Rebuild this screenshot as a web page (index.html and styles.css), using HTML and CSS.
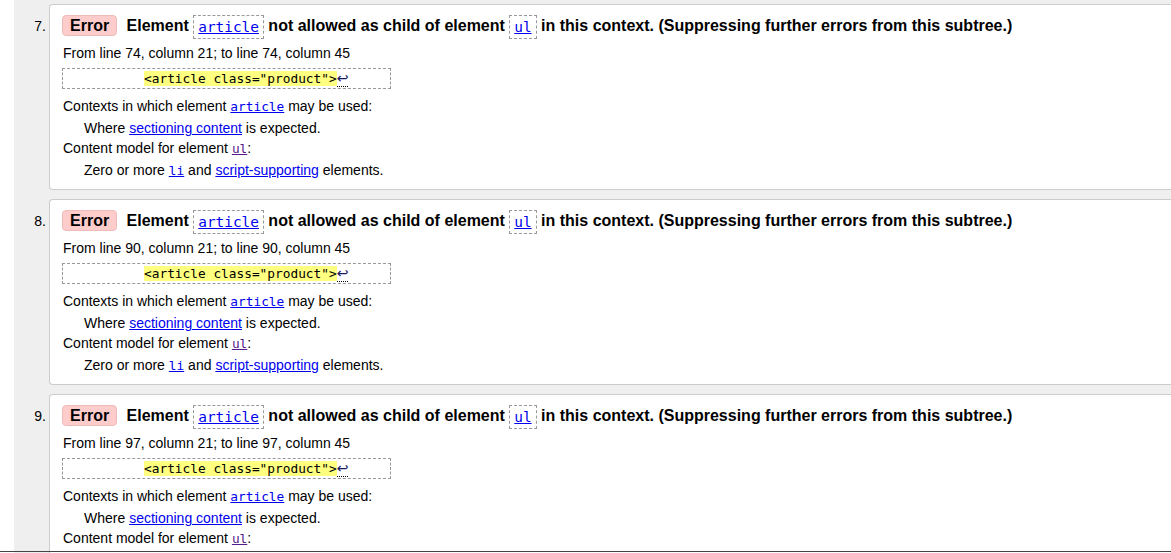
FILE: index.html
```html
<!DOCTYPE html>
<html lang="en">
<head>
<meta charset="utf-8">
<title>Validation results</title>
<link rel="stylesheet" href="styles.css">
</head>
<body>
<ol class="results">
  <li class="item">
    <span class="num">7.</span>
    <div class="card">
      <p class="msg"><span class="badge">Error</span> Element <code class="box"><a href="#">article</a></code> not allowed as child of element <code class="box"><a href="#">ul</a></code> in this context. (Suppressing further errors from this subtree.)</p>
      <p class="loc">From line 74, column 21; to line 74, column 45</p>
      <p class="extract"><code>          <mark>&lt;article class="product"&gt;</mark><span class="lf">↩</span></code></p>
      <dl class="details">
        <dt>Contexts in which element <a href="#"><code>article</code></a> may be used:</dt>
        <dd>Where <a href="#">sectioning content</a> is expected.</dd>
        <dt>Content model for element <a class="visited" href="#"><code>ul</code></a>:</dt>
        <dd>Zero or more <a href="#"><code>li</code></a> and <a href="#">script-supporting</a> elements.</dd>
      </dl>
    </div>
  </li>
  <li class="item">
    <span class="num">8.</span>
    <div class="card">
      <p class="msg"><span class="badge">Error</span> Element <code class="box"><a href="#">article</a></code> not allowed as child of element <code class="box"><a href="#">ul</a></code> in this context. (Suppressing further errors from this subtree.)</p>
      <p class="loc">From line 90, column 21; to line 90, column 45</p>
      <p class="extract"><code>          <mark>&lt;article class="product"&gt;</mark><span class="lf">↩</span></code></p>
      <dl class="details">
        <dt>Contexts in which element <a href="#"><code>article</code></a> may be used:</dt>
        <dd>Where <a href="#">sectioning content</a> is expected.</dd>
        <dt>Content model for element <a class="visited" href="#"><code>ul</code></a>:</dt>
        <dd>Zero or more <a href="#"><code>li</code></a> and <a href="#">script-supporting</a> elements.</dd>
      </dl>
    </div>
  </li>
  <li class="item">
    <span class="num">9.</span>
    <div class="card">
      <p class="msg"><span class="badge">Error</span> Element <code class="box"><a href="#">article</a></code> not allowed as child of element <code class="box"><a href="#">ul</a></code> in this context. (Suppressing further errors from this subtree.)</p>
      <p class="loc">From line 97, column 21; to line 97, column 45</p>
      <p class="extract"><code>          <mark>&lt;article class="product"&gt;</mark><span class="lf">↩</span></code></p>
      <dl class="details">
        <dt>Contexts in which element <a href="#"><code>article</code></a> may be used:</dt>
        <dd>Where <a href="#">sectioning content</a> is expected.</dd>
        <dt>Content model for element <a class="visited" href="#"><code>ul</code></a>:</dt>
        <dd>Zero or more <a href="#"><code>li</code></a> and <a href="#">script-supporting</a> elements.</dd>
      </dl>
    </div>
  </li>
</ol>
<div class="edge"></div>
</body>
</html>
```

FILE: styles.css
```css
html, body {
  margin: 0;
  padding: 0;
  background: #fff;
  overflow: hidden;
}
body {
  font-family: "Liberation Sans", Arial, sans-serif;
  font-size: 14px;
  color: #000;
}
a {
  color: #0000ee;
  text-decoration: underline;
}
a.visited {
  color: #551a8b;
}
code {
  font-family: "DejaVu Sans Mono", "Liberation Mono", monospace;
  font-size: 12.8px;
  line-height: 1;
}
.results {
  list-style: none;
  margin: 0 0 0 14px;
  padding: 4px 0 0 0;
  background: #efefef;
  display: flex;
  flex-direction: column;
  gap: 9px;
}
.item {
  display: flex;
  align-items: flex-start;
}
.num {
  width: 32px;
  flex: none;
  text-align: right;
  padding-right: 3px;
  padding-top: 8px;
  line-height: 28px;
  font-size: 14px;
}
.card {
  flex: 1;
  background: #fff;
  border: 1px solid #cccccc;
  border-right: none;
  border-radius: 4px 0 0 4px;
  padding: 7px 0 9px 13px;
}
.msg {
  margin: 0 0 3px 0;
  font-size: 16px;
  font-weight: bold;
  line-height: 28px;
  height: 28px;
  white-space: nowrap;
}
.badge {
  display: inline-block;
  margin-left: -1px;
  margin-right: 5px;
  padding: 0 7px;
  line-height: 19px;
  background: #ffcccc;
  border: 1px solid #eebbbb;
  border-radius: 4px;
  vertical-align: 0;
}
.box {
  display: inline-block;
  font-size: 14.4px;
  font-weight: normal;
  line-height: 18px;
  padding: 2px 4px;
  border: 1px dashed #999;
  vertical-align: -1px;
}
.loc {
  margin: 0 0 5px 0;
  line-height: 20px;
  height: 20px;
}
.extract {
  margin: 0 0 7px -1px;
  width: 329px;
  height: 21px;
  box-sizing: border-box;
  border: 1px dashed #999;
  line-height: 19px;
  padding: 0 4px;
  white-space: pre;
  overflow: hidden;
}
.extract code {
  line-height: 19px;
}
.extract mark {
  background: #ffff80;
  color: #000;
}
.lf {
  font-family: "DejaVu Sans", sans-serif;
  font-size: 14px;
  border-bottom: 1px dotted #000;
  color: #1a1a60;
}
.details {
  margin: 0;
  line-height: 20px;
}
.details dt {
  margin: 0;
  height: 20px;
}
.details dd {
  margin: 2px 0 0 21px;
  height: 20px;
}
.edge {
  position: fixed;
  left: 0;
  right: 0;
  bottom: 1px;
  height: 1px;
  background: #444;
}
```
